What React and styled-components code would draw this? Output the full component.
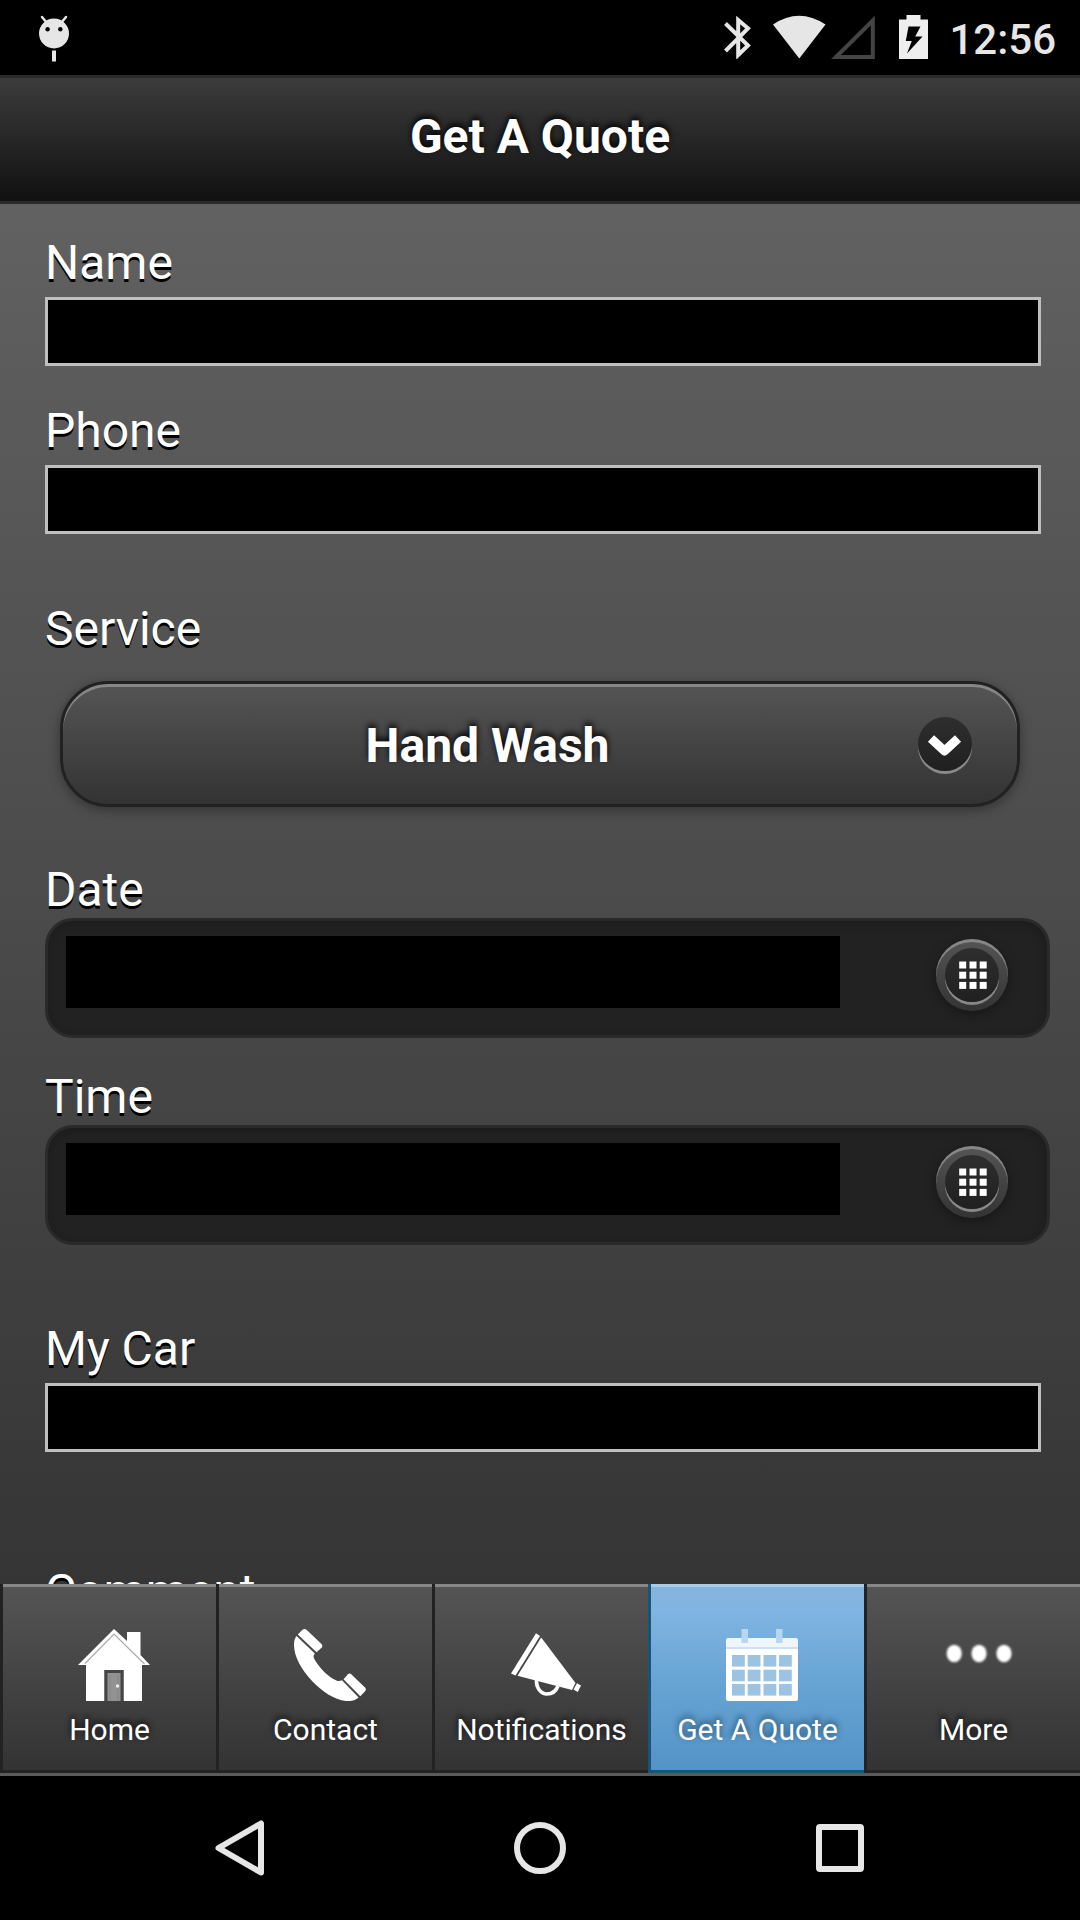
import React, { useState } from "react";
import styled, { createGlobalStyle, css } from "styled-components";

const GlobalStyle = createGlobalStyle`
  * {
    box-sizing: border-box;
  }
  body {
    margin: 0;
    background: #000;
    font-family: Roboto, "Liberation Sans", sans-serif;
    color: #fff;
  }
`;

const HomeIcon = () => (
  <TabIcon viewBox="0 0 72 72">
    <path
      d="M36 0 49 12V3h13.5v23L72 36h-8v36H45.5V41h-19v31H8V36H0z"
      fill="#fff"
    />
    <path d="M7 34.5 36 5l30.5 30" fill="none" stroke="#aaa" strokeWidth="1.2" />
    <path d="M26.5 41h19v31h-19z" fill="#464646" />
    <path d="M29.5 44h13v28h-13z" fill="#929292" />
    <path d="M32 46v26M40 46v26" stroke="#858585" strokeWidth="1" />
    <circle cx="39.5" cy="57" r="1.7" fill="#eee" />
  </TabIcon>
);

const PhoneIcon = () => (
  <TabIcon viewBox="0 0 72 72">
    <g fill="#fff">
      <path d="M8.5.8Q10.5-.8 12.5.8L27.5 15q1.5 1.8.3 3.4L22.6 23.3 3.8 5.6z" />
      <path d="M2.5 7 20.8 24.6C19 27 19.4 28.3 20.6 30.5 26 40 35 48.5 43 51.8c2 .7 3.6 0 5-.6L64.6 68.5C61 71.5 58 72 52 72 40 71 28 62 18 52 8 41 0 28 0 16 0 12 .8 9 2.5 7z" />
      <path d="M49.5 50.2 54 45.2q1.5-1.5 3.2 0L71 58.4q1.7 1.8.3 3.6L66.3 67.2z" />
    </g>
  </TabIcon>
);

const MegaphoneIcon = () => (
  <TabIcon viewBox="0 0 72 72">
    <path
      d="M26.5 50.5c-.5 8 4 14.5 10.5 14.5 5 0 9-3 11-8"
      fill="none"
      stroke="#fff"
      strokeWidth="3.6"
    />
    <g fill="#fff">
      <path d="M26 4.3 30 7 5.5 46.5 1 44.5z" />
      <path d="M31.2 8.5 65.5 54 62 61 7.5 46.8z" />
      <path d="M67 54.2 71 56.6 67.8 63 63.5 60.5z" />
    </g>
  </TabIcon>
);

const CalendarIcon = () => (
  <TabIcon viewBox="0 0 72 72">
    <path d="M0 19h72v51q0 2-2 2H2q-2 0-2-2z" fill="#fff" />
    <path d="M2 9h68q2 0 2 2v9H0v-9q0-2 2-2z" fill="#eef5fb" />
    <path d="M0 18h72v2H0z" fill="#cfe0f0" />
    <path d="M15.5 0H22v14h-6.5zM50 0h6.5v14H50z" fill="#b8d6f1" />
    {[26, 40.7, 55].map((y) =>
      [6, 21.7, 37.5, 53].map((x) => (
        <rect
          key={`${x}-${y}`}
          x={x}
          y={y}
          width="12.8"
          height="11.6"
          fill="#9dc3e2"
        />
      ))
    )}
  </TabIcon>
);

const MoreIcon = () => (
  <TabIcon viewBox="0 0 72 72">
    <Dots fill="#fff">
      <ellipse cx="12.2" cy="24.5" rx="7.6" ry="8.7" />
      <ellipse cx="37" cy="24.5" rx="7.6" ry="8.7" />
      <ellipse cx="62" cy="24.5" rx="7.6" ry="8.7" />
    </Dots>
  </TabIcon>
);

const tabs = [
  { name: "Home", Icon: HomeIcon },
  { name: "Contact", Icon: PhoneIcon },
  { name: "Notifications", Icon: MegaphoneIcon },
  { name: "Get A Quote", Icon: CalendarIcon },
  { name: "More", Icon: MoreIcon },
];

const StatusBar = () => (
  <Status>
    <svg width="34" height="50" viewBox="0 0 34 50">
      <circle cx="17" cy="21.5" r="15" fill="#e6e6e6" />
      <path
        d="M5 5l5 6M29 5l-5 6"
        stroke="#e6e6e6"
        strokeWidth="2.5"
        strokeLinecap="round"
      />
      <circle cx="10.6" cy="17.3" r="2.2" />
      <circle cx="23.3" cy="17.3" r="2.2" />
      <path d="M15 38.5h4v11h-4z" fill="#e6e6e6" />
    </svg>
    <StatusIcons>
      <svg width="155" height="44" viewBox="0 0 155 44">
        <path
          d="M2.5 8.5 25 30.5 15.2 40V5L25 13.3 2.5 36"
          fill="none"
          stroke="#e6e6e6"
          strokeWidth="4"
        />
        <path d="M50 9.500Q76-8 102.500 9.500L76.300 43.500z" fill="#e6e6e6" />
        <path
          d="M113 42 149.800 5.500V42z"
          fill="none"
          stroke="#444"
          strokeWidth="4"
        />
      </svg>
      <svg width="29" height="44" viewBox="0 0 29 44">
        <path
          d="M7.500 0h14v4.500H29V44H0V4.500h7.500zM9.500 11.500 6.800 26h6L8 38.500 23.500 21.500h-7.300L21.500 11.500z"
          fill="#eee"
          fillRule="evenodd"
        />
      </svg>
      <Clock>12:56</Clock>
    </StatusIcons>
  </Status>
);

const PickerField = ({ label }) => (
  <Field>
    <Label>{label}</Label>
    <Picker>
      <PickerValue readOnly aria-label={label} />
      <PickerButton>
        <Round>
          <svg width="29" height="29" viewBox="0 0 29 29">
            {[0.5, 10.7, 20.9].map((y) =>
              [1.2, 11.5, 21.7].map((x) => (
                <rect
                  key={`${x}-${y}`}
                  x={x}
                  y={y}
                  width="7"
                  height="7"
                  fill="#fff"
                />
              ))
            )}
          </svg>
        </Round>
      </PickerButton>
    </Picker>
  </Field>
);

export const App = () => {
  const [active, setActive] = useState("Get A Quote");

  return (
    <Screen>
      <GlobalStyle />
      <StatusBar />
      <Header>Get A Quote</Header>
      <Form>
        <Field>
          <Label>Name</Label>
          <Input aria-label="Name" />
        </Field>
        <Field $top={37}>
          <Label>Phone</Label>
          <Input aria-label="Phone" />
        </Field>
        <Field $top={67}>
          <Label>Service</Label>
          <Select type="button">
            <span>Hand Wash</span>
            <Round>
              <svg width="36" height="25" viewBox="0 0 36 25">
                <path
                  d="M4 6.500 17.500 19 31 6.500"
                  fill="none"
                  stroke="#fff"
                  strokeWidth="9"
                  strokeLinejoin="round"
                />
              </svg>
            </Round>
          </Select>
        </Field>
        <Gap $size={55} />
        <PickerField label="Date" />
        <Gap $size={31} />
        <PickerField label="Time" />
        <Field $top={76}>
          <Label>My Car</Label>
          <Input aria-label="My Car" />
        </Field>
        <Field $top={112}>
          <Label>Comment</Label>
        </Field>
      </Form>
      <TabBar>
        {tabs.map(({ name, Icon }) => (
          <Tab
            key={name}
            type="button"
            $active={name === active}
            onClick={() => setActive(name)}
          >
            <Icon />
            {name}
          </Tab>
        ))}
      </TabBar>
      <SystemBar>
        <svg width="60" height="60" viewBox="0 0 60 60">
          <path d="M8.5 30 51 5.5V54.5z" />
        </svg>
        <svg width="60" height="60" viewBox="0 0 60 60">
          <circle cx="30" cy="30" r="23" />
        </svg>
        <svg width="60" height="60" viewBox="0 0 60 60">
          <rect x="9" y="9" width="42" height="42" rx="1" />
        </svg>
      </SystemBar>
    </Screen>
  );
};

const Screen = styled.div`
  width: 1080px;
  height: 1920px;
  display: flex;
  flex-direction: column;
  overflow: hidden;
`;
const Status = styled.div`
  flex: none;
  height: 75px;
  padding: 12px 24px 0 37px;
  display: flex;
  justify-content: space-between;
  align-items: flex-start;
  background: #000;
`;
const StatusIcons = styled.div`
  display: flex;
  align-items: flex-start;
  padding-top: 3px;
  svg + svg {
    margin-left: 21px;
  }
`;
const Clock = styled.span`
  margin-left: 21px;
  padding-top: 1px;
  font-size: 42px;
  font-weight: 500;
  line-height: 48px;
  color: #e6e6e6;
`;
const Header = styled.h1`
  flex: none;
  height: 129px;
  margin: 0;
  padding-bottom: 6px;
  display: flex;
  align-items: center;
  justify-content: center;
  border-top: 3px solid #2a2a2a;
  border-bottom: 3px solid #2a2a2a;
  background: linear-gradient(#3c3c3c, #111);
  font-size: 48px;
  font-weight: 700;
  text-shadow: 0 -3px 6px #000;
`;
const Form = styled.main`
  flex: 1;
  min-height: 0;
  overflow: hidden;
  padding: 31px 30px 0 45px;
  background: linear-gradient(#616161, #353535);
`;
const Field = styled.div`
  margin-top: ${({ $top }) => $top || 0}px;
`;
const Gap = styled.div`
  height: ${({ $size }) => $size}px;
`;
const Label = styled.div`
  font-size: 48px;
  line-height: 56px;
  text-shadow: 0 3px 0 #000;
`;
const Input = styled.input`
  display: block;
  width: 996px;
  height: 69px;
  margin-top: 6px;
  padding: 0 6px;
  border: 3px solid #bfbfbf;
  border-radius: 0;
  outline: none;
  background: #000;
  color: #fff;
  font: 48px Roboto, sans-serif;
`;
const Select = styled.button`
  width: 960px;
  height: 126px;
  margin: 24px 0 0 15px;
  padding: 0 45px 0 57px;
  display: flex;
  align-items: center;
  border: 3px solid #222;
  border-radius: 48px;
  background: linear-gradient(#555, #333);
  box-shadow: inset 0 3px 0 rgba(255, 255, 255, 0.3),
    0 3px 12px rgba(0, 0, 0, 0.35);
  color: #fff;
  font: 700 48px Roboto, sans-serif;
  text-shadow: 0 -3px 6px #000;
  span {
    flex: 1;
    padding: 2px 63px 0 0;
  }
`;
const Round = styled.i`
  width: 54px;
  height: 54px;
  display: flex;
  align-items: center;
  justify-content: center;
  border-radius: 50%;
  background: linear-gradient(#2e2e2e, #202020);
  box-shadow: 0 3px 0 rgba(255, 255, 255, 0.4);
`;
const Picker = styled.div`
  width: 1005px;
  height: 120px;
  padding: 15px 39px 0 18px;
  display: flex;
  justify-content: space-between;
  align-items: flex-start;
  border: 3px solid #2a2a2a;
  border-radius: 28px;
  background: #222;
  box-shadow: inset 0 3px 12px rgba(0, 0, 0, 0.2);
`;
const PickerValue = styled.input`
  width: 774px;
  height: 72px;
  padding: 0 12px;
  border: 0;
  outline: none;
  background: #000;
  color: #fff;
  font: 48px Roboto, sans-serif;
`;
const PickerButton = styled.button`
  width: 72px;
  height: 72px;
  margin-top: 3px;
  padding: 0;
  display: flex;
  align-items: center;
  justify-content: center;
  border: 0;
  border-radius: 50%;
  background: linear-gradient(#555, #333);
  box-shadow: inset 0 3px 0 rgba(255, 255, 255, 0.3),
    0 3px 12px rgba(0, 0, 0, 0.35);
`;
const TabBar = styled.nav`
  flex: none;
  height: 192px;
  display: grid;
  grid-template-columns: repeat(5, 216px);
  border-bottom: 3px solid #5a5a5a;
`;
const Tab = styled.button`
  padding: 45px 0 0;
  display: flex;
  flex-direction: column;
  align-items: center;
  border: 0 solid #222;
  border-width: 0 0 3px 3px;
  border-radius: 0;
  background: linear-gradient(#555, #333);
  box-shadow: inset 0 3px 0 rgba(255, 255, 255, 0.3);
  color: #fff;
  font: 30px/36px Roboto, sans-serif;
  text-shadow: 0 -3px 6px rgba(0, 0, 0, 0.85);
  ${({ $active }) =>
    $active &&
    css`
      border-color: #155678;
      background: linear-gradient(#85b5de, #80b4e2 15%, #68a5d5 50%, #5393c6);
      text-shadow: 0 -3px 6px rgba(20, 50, 75, 0.8);
    `}
`;
const TabIcon = styled.svg`
  flex: none;
  width: 72px;
  height: 72px;
  margin: 0 0 11px 9px;
`;
/* the dots have a soft edge, unlike the other tab icons */
const Dots = styled.g`
  filter: blur(1px);
`;
const SystemBar = styled.div`
  flex: none;
  height: 144px;
  padding: 0 210px;
  display: flex;
  align-items: center;
  justify-content: space-between;
  background: #000;
  svg {
    fill: none;
    stroke: #e6e6e6;
    stroke-width: 6px;
    stroke-linejoin: round;
  }
`;

export default App;
